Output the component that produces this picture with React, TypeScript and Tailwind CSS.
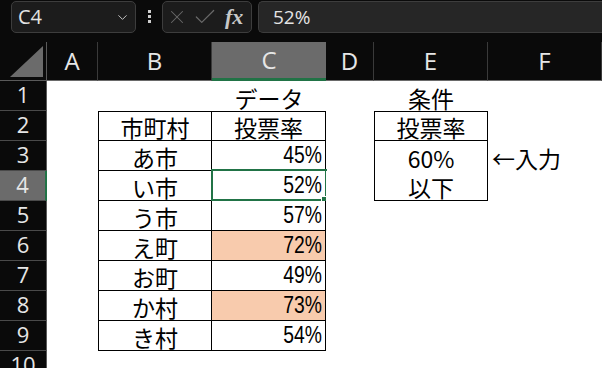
import { ChevronDown, X, Check } from 'lucide-react'

const cols = ['A', 'B', 'C', 'D', 'E', 'F']

type Cell = {
  text?: string
  align?: 'left' | 'center' | 'right'
  cls?: string
  num?: boolean
  selected?: boolean
}

const names = ['あ市', 'い市', 'う市', 'え町', 'お町', 'か村', 'き村']
const values = ['45%', '52%', '57%', '72%', '49%', '73%', '54%']

// build one row of cells (A..F) for a sheet row number
function rowCells(r: number): Cell[] {
  const cells: Cell[] = [{}, {}, {}, {}, {}, {}]
  if (r === 1) {
    cells[2] = { text: 'データ', align: 'center' }
    cells[4] = { text: '条件', align: 'center' }
  }
  if (r === 2) {
    cells[1] = { text: '市町村', align: 'center', cls: 'border-l border-r border-b border-t border-black' }
    cells[2] = { text: '投票率', align: 'center', cls: 'border-r border-b border-t border-black' }
    cells[4] = { text: '投票率', align: 'center', cls: 'border border-black' }
  }
  if (r >= 3 && r <= 9) {
    const i = r - 3
    const orange = r === 6 || r === 8
    cells[1] = { text: names[i], align: 'center', cls: 'border-l border-r border-b border-black' }
    cells[2] = {
      text: values[i],
      align: 'right',
      num: true,
      selected: r === 4,
      cls: `border-r border-b border-black ${orange ? 'bg-[#f8cbad]' : 'bg-white'}`,
    }
  }
  if (r === 3) {
    cells[4] = { text: '60%', align: 'center', cls: 'border-l border-r border-black' }
    cells[5] = { text: '←入力', align: 'left' }
  }
  if (r === 4) {
    cells[4] = { text: '以下', align: 'center', cls: 'border-l border-r border-b border-black' }
  }
  return cells
}

export default function App() {
  const rows = Array.from({ length: 10 }, (_, i) => i + 1)

  return (
    <div className="w-[602px] h-[368px] overflow-hidden bg-[#0a0a0a] font-['Noto_Sans_CJK_JP',sans-serif]">
      {/* formula bar */}
      <div className="flex items-start h-[42px] pt-[1px]">
        <div className="ml-[11px] w-[125px] h-[32px] rounded-[5px] border border-[#3d3d3d] bg-[#1c1c1c] flex items-center justify-between pl-[6px] pr-[5px]">
          <span className="text-[20px] text-[#e4e4e4] font-['Open_Sans',sans-serif] leading-none">C4</span>
          <ChevronDown size={15} strokeWidth={1.5} className="text-[#cfcfcf]" />
        </div>
        <div className="ml-[12px] mt-[9px] flex flex-col gap-[2px]">
          <div className="w-[3px] h-[3px] bg-[#cfcfcf]" />
          <div className="w-[3px] h-[3px] bg-[#cfcfcf]" />
          <div className="w-[3px] h-[3px] bg-[#cfcfcf]" />
        </div>
        <div className="ml-[11px] w-[90px] h-[32px] rounded-[5px] border border-[#3d3d3d] bg-[#1c1c1c] flex items-center pl-[3px]">
          <X size={22} strokeWidth={1.1} className="text-[#6a6a6a]" />
          <Check size={26} strokeWidth={1.1} className="ml-[4px] text-[#6a6a6a]" />
          <span className="ml-[7px] text-[22px] italic font-bold text-[#c8c8c8] font-['Liberation_Serif',serif] leading-none">fx</span>
        </div>
        <div className="ml-[6px] flex-1 h-[32px] rounded-l-[5px] border border-r-0 border-[#3d3d3d] bg-[#262626] flex items-center pl-[14px]">
          <span className="text-[19px] text-[#e4e4e4] font-['Open_Sans',sans-serif] leading-none">52%</span>
        </div>
      </div>

      {/* sheet */}
      <div className="grid grid-cols-[47px_51px_114px_114px_48px_114px_114px] grid-rows-[39px_repeat(10,30px)]">
        {/* corner */}
        <div className="bg-[#0a0a0a] border-r border-b border-[#5a5a5a] flex items-end justify-end pr-[3px] pb-[3px]">
          <svg width="33" height="31" viewBox="0 0 33 31">
            <polygon points="33,0 33,31 0,31" fill="#6b6b6b" />
          </svg>
        </div>
        {cols.map((c) => (
          <div
            key={c}
            className={
              c === 'C'
                ? 'bg-[#6b6b6b] border-b-[3px] border-[#217346] flex items-center justify-center'
                : 'bg-[#0a0a0a] border-r border-[#3a3a3a] border-b border-b-[#6a6a6a] flex items-center justify-center'
            }
          >
            <span className="text-[24px] text-[#e6e6e6] font-['Open_Sans',sans-serif] leading-none">{c}</span>
          </div>
        ))}

        {rows.map((r) => (
          <RowView key={r} r={r} />
        ))}
      </div>
    </div>
  )
}

function RowView({ r }: { r: number }) {
  const cells = rowCells(r)
  return (
    <>
      <div
        className={
          r === 4
            ? 'bg-[#6b6b6b] border-r-2 border-r-[#217346] border-b border-b-[#4a4a4a] flex items-start justify-center pt-[2px]'
            : 'bg-[#0a0a0a] border-r border-r-[#5a5a5a] border-b border-b-[#4a4a4a] flex items-start justify-center pt-[2px]'
        }
      >
        <span className="text-[22px] text-[#e6e6e6] font-['Open_Sans',sans-serif] leading-none">{r}</span>
      </div>
      <div className="bg-white" />
      {cells.map((cell, i) => {
        if (i === 0) return null
        const align =
          cell.align === 'right' ? 'justify-end pr-[3px]' : cell.align === 'left' ? 'justify-start pl-[4px]' : 'justify-center'
        const bg = cell.cls?.includes('bg-') ? '' : 'bg-white'
        return (
          <div key={i} className={`relative flex items-end ${bg} ${align} ${cell.cls ?? ''}`}>
            {cell.text && (
              <span
                className={
                  cell.num
                    ? "text-[23px] leading-none pb-[3px] text-black scale-x-[0.84] origin-right font-['Liberation_Sans',sans-serif]"
                    : 'text-[23px] leading-none pb-[1px] text-black whitespace-nowrap'
                }
              >
                {cell.text}
              </span>
            )}
            {cell.selected && (
              <div className="absolute -left-[1px] -top-[2px] -right-[2px] -bottom-[1px] border-2 border-[#217346]">
                <div className="absolute -right-[3px] -bottom-[3px] w-[6px] h-[5px] bg-[#217346] outline outline-1 outline-white" />
              </div>
            )}
          </div>
        )
      })}
    </>
  )
}
